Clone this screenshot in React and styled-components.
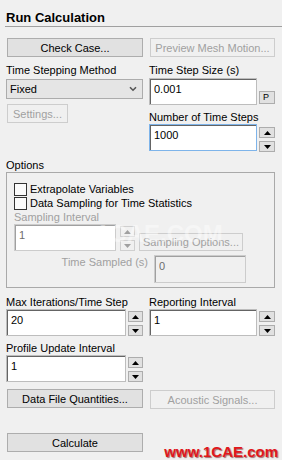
import React from 'react';
import styled, { createGlobalStyle, css } from 'styled-components';

const GlobalStyle = createGlobalStyle`
  body {
    margin: 0;
    background: #f0f0f0;
    font-family: "Liberation Sans", Arial, sans-serif;
    font-size: 11px;
    color: #000;
  }
`;

const Panel = styled.div`
  position: relative;
  width: 282px;
  height: 460px;
  overflow: hidden;
  background: #f0f0f0;
`;

const Header = styled.div`
  margin-left: 5px;
  padding: 10px 0 0 1px;
  border-bottom: 1px solid #a0a0a0;
`;

const Title = styled.h1`
  margin: 0;
  font-size: 13px;
  line-height: 16px;
  font-weight: bold;
`;

const Body = styled.div`
  padding: 0 7px 0 6px;
`;

const TwoCols = styled.div`
  display: grid;
  grid-template-columns: 137px 126px;
  column-gap: 6px;
  margin-top: ${p => p.$top || 0}px;
`;

const Col = styled.div`
  display: flex;
  flex-direction: column;
  align-items: flex-start;
`;

const Label = styled.div`
  line-height: 14px;
  height: 14px;
  white-space: nowrap;
  margin-top: ${p => p.$top || 0}px;
  color: ${p => (p.$disabled ? '#a0a0a0' : '#000')};
`;

const Button = styled.button`
  box-sizing: border-box;
  height: ${p => p.$h || 19}px;
  width: ${p => p.$w}px;
  margin: ${p => p.$top || 0}px 0 0 ${p => (p.$left === undefined ? 1 : p.$left)}px;
  padding: 0;
  font: inherit;
  line-height: 14px;
  border: 1px solid #adadad;
  background: #e1e1e1;
  color: #000;
  white-space: nowrap;
  flex-shrink: 0;
  ${p =>
    p.disabled &&
    css`
      border-color: #cdcdcd;
      background: #f0f0f0;
      color: #a0a0a0;
    `}
`;

const Select = styled.div`
  box-sizing: border-box;
  width: 137px;
  height: 20px;
  margin-top: 2px;
  padding: 0 5px 0 3px;
  display: flex;
  align-items: center;
  justify-content: space-between;
  border: 1px solid #acacac;
  background: #e5e5e5;
`;

const FieldRow = styled.div`
  display: flex;
  align-items: flex-start;
  gap: ${p => p.$gap || 2}px;
  margin-top: ${p => p.$top || 0}px;
`;

const Field = styled.input`
  box-sizing: border-box;
  width: ${p => p.$w}px;
  height: ${p => p.$h || 27}px;
  margin: 0;
  padding: 3px 3px 9px 4px;
  font: inherit;
  font-size: 11px;
  color: #000;
  border: 1px solid #bdbdbd;
  box-shadow: inset 1px 1px 0 #646464;
  background: #fff;
  outline: none;
  ${p =>
    p.$focus &&
    css`
      border-color: #7eb4ea;
    `}
  ${p =>
    p.disabled &&
    css`
      color: #6d6d6d;
      border-color: #cccccc;
      box-shadow: inset 1px 1px 0 #a0a0a0;
    `}
  ${p =>
    p.$greyed &&
    css`
      background: #f0f0f0;
    `}
`;

const Spinner = styled.div`
  display: flex;
  flex-direction: column;
  gap: 3px;
  padding-top: ${p => p.$pad || 3}px;
`;

const SpinBtn = styled.div`
  box-sizing: border-box;
  width: ${p => p.$w || 16}px;
  height: 11px;
  display: flex;
  align-items: center;
  justify-content: center;
  border: 1px solid ${p => (p.$off ? '#cfcfcf' : '#adadad')};
  background: ${p => (p.$off ? '#f0f0f0' : '#e1e1e1')};
`;

const PButton = styled.div`
  box-sizing: border-box;
  align-self: flex-end;
  margin-bottom: 1px;
  width: 16px;
  height: 13px;
  border: 1px solid #adadad;
  background: #e1e1e1;
  font-size: 9px;
  line-height: 11px;
  padding-left: 3px;
`;

const GroupLabel = styled.div`
  line-height: 14px;
  margin-top: 6px;
`;

const GroupBox = styled.div`
  box-sizing: border-box;
  width: 269px;
  border: 1px solid #a9a9a9;
  padding: 9px 0 4px 7px;
`;

const CheckRow = styled.label`
  display: flex;
  align-items: center;
  gap: 3px;
  height: 14px;
  line-height: 14px;
`;

const Box = styled.span`
  box-sizing: border-box;
  width: 13px;
  height: 13px;
  border: 1px solid #333;
  background: #fbfbfb;
`;

const SampledLabel = styled.div`
  width: 134px;
  margin-right: 4px;
  text-align: right;
  line-height: 14px;
  color: #a0a0a0;
`;

const Watermark = styled.div`
  position: absolute;
  right: 4px;
  bottom: 0;
  font-size: 15px;
  font-weight: bold;
  color: #e0171c;
  text-shadow: 1px 1px 1px rgba(90, 0, 0, 0.55);
`;

const FaintMark = styled.div`
  position: absolute;
  left: 96px;
  top: 220px;
  font-size: 24px;
  font-weight: bold;
  color: #fff;
  opacity: 0.4;
  pointer-events: none;
`;

const Tri = ({ up, color = '#000' }) => (
  <svg width="7" height="4" viewBox="0 0 7 4">
    <path d={up ? 'M0 4 L3.5 0 L7 4 Z' : 'M0 0 L3.5 4 L7 0 Z'} fill={color} />
  </svg>
);

const Spin = ({ w, pad, off }) => (
  <Spinner $pad={pad}>
    <SpinBtn $w={w} $off={off}><Tri up color={off ? '#a0a0a0' : '#000'} /></SpinBtn>
    <SpinBtn $w={w} $off={off}><Tri color={off ? '#a0a0a0' : '#000'} /></SpinBtn>
  </Spinner>
);

export default function App() {
  return (
    <Panel>
      <GlobalStyle />
      <Header>
        <Title>Run Calculation</Title>
      </Header>
      <Body>
        <TwoCols $top={11}>
          <Col>
            <Button $w={136}>Check Case...</Button>
            <Label $top={6}>Time Stepping Method</Label>
            <Select>
              <span>Fixed</span>
              <svg width="8" height="6" viewBox="0 0 8 6">
                <path d="M1 1.2 L4 4.2 L7 1.2" stroke="#555" strokeWidth="1.6" fill="none" />
              </svg>
            </Select>
            <Button $w={61} $top={5} disabled>Settings...</Button>
          </Col>
          <Col>
            <Button $w={125} disabled>Preview Mesh Motion...</Button>
            <Label $top={6}>Time Step Size (s)</Label>
            <FieldRow $top={1}>
              <Field $w={108} defaultValue="0.001" readOnly />
              <PButton>P</PButton>
            </FieldRow>
            <Label $top={5}>Number of Time Steps</Label>
            <FieldRow>
              <Field $w={108} $focus defaultValue="1000" readOnly />
              <Spin />
            </FieldRow>
          </Col>
        </TwoCols>

        <GroupLabel>Options</GroupLabel>
        <GroupBox>
          <CheckRow><Box />Extrapolate Variables</CheckRow>
          <CheckRow><Box />Data Sampling for Time Statistics</CheckRow>
          <Label $disabled>Sampling Interval</Label>
          <FieldRow $gap={4}>
            <Field $w={102} disabled defaultValue="1" />
            <Spin w={15} pad={2} off />
            <Button $w={104} $h={18} $left={0} $top={9} disabled>Sampling Options...</Button>
          </FieldRow>
          <FieldRow $gap={0} $top={4}>
            <SampledLabel>Time Sampled (s)</SampledLabel>
            <Field $w={92} $h={28} disabled $greyed defaultValue="0" />
          </FieldRow>
        </GroupBox>

        <TwoCols $top={7}>
          <Col>
            <Label>Max Iterations/Time Step</Label>
            <FieldRow>
              <Field $w={120} defaultValue="20" readOnly />
              <Spin w={15} pad={2} />
            </FieldRow>
            <Label $top={5}>Profile Update Interval</Label>
            <FieldRow>
              <Field $w={120} defaultValue="1" readOnly />
              <Spin w={15} pad={2} />
            </FieldRow>
            <Button $w={136} $top={7}>Data File Quantities...</Button>
            <Button $w={136} $top={25}>Calculate</Button>
          </Col>
          <Col>
            <Label>Reporting Interval</Label>
            <FieldRow>
              <Field $w={108} defaultValue="1" readOnly />
              <Spin pad={2} />
            </FieldRow>
            <Button $w={125} $top={54} disabled>Acoustic Signals...</Button>
          </Col>
        </TwoCols>
      </Body>
      <FaintMark>1CAE.COM</FaintMark>
      <Watermark>www.1CAE.com</Watermark>
    </Panel>
  );
}
